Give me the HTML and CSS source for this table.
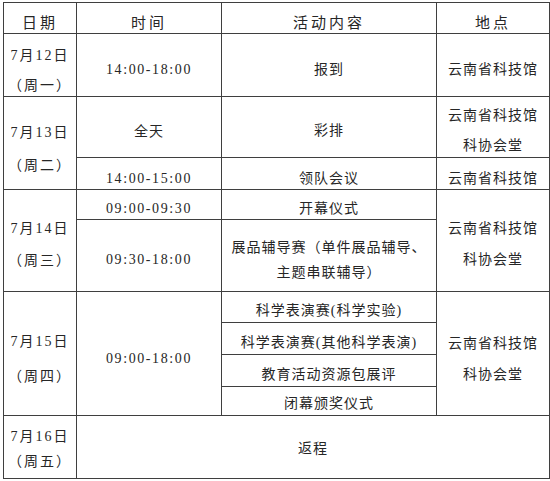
FILE: index.html
```html
<!DOCTYPE html>
<html lang="zh">
<head>
<meta charset="utf-8">
<link rel="stylesheet" href="styles.css">
</head>
<body>
<table class="sched">
  <colgroup>
    <col class="c-date">
    <col class="c-time">
    <col class="c-act">
    <col class="c-loc">
  </colgroup>
  <tr class="r-head">
    <th><div class="in s5">日期</div></th>
    <th><div class="in s5">时间</div></th>
    <th><div class="in s5">活动内容</div></th>
    <th><div class="in s5">地点</div></th>
  </tr>
  <tr class="r63">
    <td class="date lh30"><div class="in s6">7月12日<br>（周一）</div></td>
    <td class="num"><div class="in s5">14:00-18:00</div></td>
    <td><div class="in s5">报到</div></td>
    <td><div class="in s5">云南省科技馆</div></td>
  </tr>
  <tr class="r61">
    <td rowspan="2" class="date lh33"><div class="in s6">7月13日<br>（周二）</div></td>
    <td><div class="in s5">全天</div></td>
    <td><div class="in s4">彩排</div></td>
    <td class="lh30"><div class="in s4">云南省科技馆<br>科协会堂</div></td>
  </tr>
  <tr class="r32">
    <td class="num"><div class="in s5">14:00-15:00</div></td>
    <td><div class="in s5">领队会议</div></td>
    <td><div class="in s5">云南省科技馆</div></td>
  </tr>
  <tr class="r30">
    <td rowspan="2" class="date lh32"><div class="in s4">7月14日<br>（周三）</div></td>
    <td class="num"><div class="in s4">09:00-09:30</div></td>
    <td><div class="in s4">开幕仪式</div></td>
    <td rowspan="2" class="lh31"><div class="in s3">云南省科技馆<br>科协会堂</div></td>
  </tr>
  <tr class="r72">
    <td class="num"><div class="in s4">09:30-18:00</div></td>
    <td class="lh25"><div class="in s4">展品辅导赛（单件展品辅导、<br>主题串联辅导）</div></td>
  </tr>
  <tr class="r31">
    <td rowspan="4" class="date lh35"><div class="in s5">7月15日<br>（周四）</div></td>
    <td rowspan="4" class="num"><div class="in s5">09:00-18:00</div></td>
    <td><div class="in s4">科学表演赛(科学实验)</div></td>
    <td rowspan="4" class="lh31"><div class="in s5">云南省科技馆<br>科协会堂</div></td>
  </tr>
  <tr class="r32">
    <td><div class="in s4">科学表演赛(其他科学表演)</div></td>
  </tr>
  <tr class="r32">
    <td><div class="in s4">教育活动资源包展评</div></td>
  </tr>
  <tr class="r29">
    <td><div class="in s3">闭幕颁奖仪式</div></td>
  </tr>
  <tr class="r63">
    <td class="date lh25"><div class="in s2">7月16日<br>（周五）</div></td>
    <td colspan="3"><div class="in s2">返程</div></td>
  </tr>
</table>
</body>
</html>
```

FILE: styles.css
```css
html, body {
  margin: 0;
  padding: 0;
  background: #ffffff;
}

body {
  width: 550px;
  height: 481px;
  overflow: hidden;
}

.sched {
  margin: 2px 0 0 3px;
  width: 546px;
  border-collapse: collapse;
  table-layout: fixed;
  font-family: "Liberation Serif", "Noto Sans CJK SC", serif;
  font-size: 14px;
  color: #262626;
  letter-spacing: 1px;
}

.c-date { width: 73px; }
.c-time { width: 145px; }
.c-act { width: 215px; }
.c-loc { width: 113px; }

.sched th,
.sched td {
  border: 1px solid #3f3f3f;
  padding: 0;
  text-align: center;
  vertical-align: middle;
  font-weight: normal;
  line-height: 20px;
}

.sched th {
  font-size: 15px;
  letter-spacing: 3px;
}

.sched td.date {
  letter-spacing: 2px;
}

.sched td.num {
  letter-spacing: 1.6px;
}

/* nudges the text down inside the cell without growing the row */
.in.s2 { padding-top: 2px; margin-bottom: -2px; }
.in.s3 { padding-top: 3px; margin-bottom: -3px; }
.in.s4 { padding-top: 4px; margin-bottom: -4px; }
.in.s5 { padding-top: 5px; margin-bottom: -5px; }
.in.s6 { padding-top: 6px; margin-bottom: -6px; }

.sched td.lh25 { line-height: 25px; }
.sched td.lh30 { line-height: 30px; }
.sched td.lh31 { line-height: 31px; }
.sched td.lh32 { line-height: 32px; }
.sched td.lh33 { line-height: 33px; }
.sched td.lh35 { line-height: 35px; }

.r-head { height: 31px; }
.r63 { height: 63px; }
.r61 { height: 61px; }
.r32 { height: 32px; }
.r30 { height: 30px; }
.r72 { height: 72px; }
.r31 { height: 31px; }
.r29 { height: 29px; }
```
